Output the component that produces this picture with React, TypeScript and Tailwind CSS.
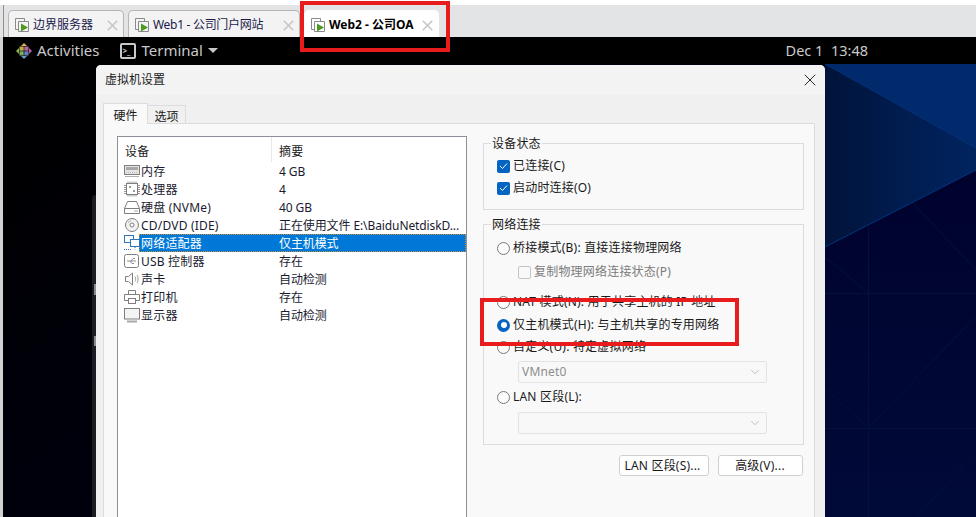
import { ChevronDown, X } from 'lucide-react';

const font = "font-['Noto_Sans','Noto_Sans_CJK_SC',sans-serif]";

function TabIcon() {
  return (
    <svg width="17" height="16" viewBox="0 0 17 16" className="shrink-0" fill="none">
      <path d="M4.5 12.5H1.5V1.5H10.5V4" stroke="#8a8a8a" />
      <path d="M4.5 4.5H14.5V14.5H4.5Z" stroke="#8a8a8a" />
      <path d="M7 6.5L14 10.5L7 14.5Z" fill="#4d9a1e" />
    </svg>
  );
}

function VmTab({
  label,
  width,
  active = false,
  tight = false,
}: {
  label: string;
  width: string;
  active?: boolean;
  tight?: boolean;
}) {
  return (
    <div
      className={`${width} h-[27px] flex items-center pl-[5px] pr-[2px] pt-[2px] rounded-t-[5px] border-t border-x ${
        active ? 'bg-white border-white font-bold text-black' : 'bg-[#f3f3f3] border-[#b5b5b5] text-[#1b1b4b]'
      }`}
    >
      <TabIcon />
      <span className={`ml-[2px] text-[12px] leading-none whitespace-nowrap flex-1 ${tight ? 'tracking-[-0.3px]' : ''}`}>
        {label}
      </span>
      <X size={17} strokeWidth={2.4} className="text-[#c8c8c8] shrink-0" />
    </div>
  );
}

function DeviceIcon({ name }: { name: string }) {
  const c = '#7e7e7e';
  return (
    <svg width="18" height="16" viewBox="0 0 18 16" fill="none" className="shrink-0 relative z-10">
      {name === 'memory' && (
        <>
          <rect x="1.5" y="2.5" width="15" height="9" fill="#e4e4e4" stroke={c} />
          <rect x="3" y="4" width="12" height="3" fill="#a8a8a8" />
          <path d="M3 9.5H15" stroke="#b8b8b8" strokeDasharray="1 1" />
          <path d="M2 13.5H16" stroke="#b0b0b0" />
        </>
      )}
      {name === 'cpu' && (
        <>
          <rect x="3.5" y="2.5" width="11" height="11" stroke={c} />
          <path d="M1 4.5H3M1 6.5H3M1 8.5H3M1 10.5H3M1 12.5H3M15 4.5H17M15 6.5H17M15 8.5H17M15 10.5H17M15 12.5H17M5 0.5V2M7 0.5V2M9 0.5V2M11 0.5V2M13 0.5V2M5 14V15.5M7 14V15.5M9 14V15.5M11 14V15.5M13 14V15.5" stroke="#9a9a9a" />
          <rect x="6" y="5" width="2" height="2" fill="#9a9a9a" />
          <rect x="10" y="9" width="2" height="2" fill="#9a9a9a" />
        </>
      )}
      {name === 'disk' && (
        <>
          <path d="M4.5 2.5H13.5L16.5 9.5V14.5H1.5V9.5Z" stroke={c} />
          <path d="M1.5 9.5H16.5" stroke={c} />
          <path d="M11 12H15" stroke="#a8a8a8" />
        </>
      )}
      {name === 'cd' && (
        <>
          <circle cx="9" cy="8" r="6.5" fill="#f2f2f2" stroke={c} />
          <circle cx="9" cy="8" r="2" fill="#fff" stroke={c} />
          <path d="M5 6A4.5 4.5 0 0 1 8 3.6" stroke="#b0b0b0" />
        </>
      )}
      {name === 'net' && (
        <>
          <rect x="1.5" y="0.5" width="9" height="7" fill="#fff" stroke="#2f74b8" />
          <rect x="7.5" y="4.5" width="9" height="7" fill="#fff" stroke="#2f74b8" />
          <path d="M1 14.5H9M12 12V14.5" stroke="#2f74b8" strokeDasharray="1 1" />
        </>
      )}
      {name === 'usb' && (
        <>
          <rect x="1.5" y="1.5" width="14" height="13" rx="2" stroke={c} />
          <path d="M4 8H13M8 8L10 5.5H12M7 8L9 10.5H11" stroke="#8c8c8c" />
        </>
      )}
      {name === 'sound' && (
        <>
          <path d="M2.5 5.5H5.5L9.5 2V14L5.5 10.5H2.5Z" stroke={c} />
          <path d="M12 5.5C13 7 13 9 12 10.5M14 4C15.5 6 15.5 10 14 12" stroke="#a0a0a0" />
        </>
      )}
      {name === 'printer' && (
        <>
          <path d="M5.5 5.5V1.5H12.5V5.5" stroke={c} />
          <path d="M5 11.5H1.5V5.5H16.5V11.5H13" stroke={c} />
          <rect x="5.5" y="9.5" width="7" height="5" stroke={c} />
        </>
      )}
      {name === 'display' && (
        <>
          <rect x="1.5" y="1.5" width="15" height="10.5" fill="#f4f4f4" stroke={c} />
          <path d="M4 14.5H14" stroke="#a8a8a8" strokeWidth="2" />
        </>
      )}
    </svg>
  );
}

const devices = [
  { icon: 'memory', name: '内存', summary: '4 GB' },
  { icon: 'cpu', name: '处理器', summary: '4' },
  { icon: 'disk', name: '硬盘 (NVMe)', summary: '40 GB' },
  { icon: 'cd', name: 'CD/DVD (IDE)', summary: '正在使用文件 E:\\BaiduNetdiskD...' },
  { icon: 'net', name: '网络适配器', summary: '仅主机模式', selected: true },
  { icon: 'usb', name: 'USB 控制器', summary: '存在' },
  { icon: 'sound', name: '声卡', summary: '自动检测' },
  { icon: 'printer', name: '打印机', summary: '存在' },
  { icon: 'display', name: '显示器', summary: '自动检测' },
];

function Check({ label }: { label: string }) {
  return (
    <div className="h-[22px] flex items-center gap-[3px]">
      <span className="w-[13px] h-[13px] rounded-[2px] bg-[#0563c1] flex items-center justify-center">
        <svg width="9" height="8" viewBox="0 0 9 8" fill="none">
          <path d="M1 4L3.5 6.5L8 1.5" stroke="#fff" strokeWidth="1" />
        </svg>
      </span>
      <span>{label}</span>
    </div>
  );
}

function Radio({ label, checked = false }: { label: string; checked?: boolean }) {
  return (
    <div className="flex items-center gap-[3px]">
      {checked ? (
        <span className="w-[13px] h-[13px] rounded-full bg-[#0563c1] flex items-center justify-center">
          <span className="w-[6px] h-[6px] rounded-full bg-white" />
        </span>
      ) : (
        <span className="w-[13px] h-[13px] rounded-full border border-[#7a7a7a] bg-[#fbfbfb]" />
      )}
      <span>{label}</span>
    </div>
  );
}

function Select({ value }: { value?: string }) {
  return (
    <div className="ml-[21px] w-[249px] h-[22px] border border-[#e3e3e3] rounded-[2px] bg-[#f8f8f8] flex items-center justify-between pl-[3px] pr-[4px] text-[#8d8d8d]">
      <span>{value}</span>
      <ChevronDown size={14} strokeWidth={1} className="text-[#9a9a9a]" />
    </div>
  );
}

// the wallpaper to the right of the dialog
function Wallpaper() {
  return (
    <svg width="151" height="453" viewBox="0 0 151 453" className="block">
      <defs>
        <linearGradient id="mid" x1="0" y1="0" x2="1" y2="0">
          <stop offset="0" stopColor="#011338" />
          <stop offset="0.5" stopColor="#011c50" />
          <stop offset="1" stopColor="#00245f" />
        </linearGradient>
        <linearGradient id="low" x1="0" y1="0" x2="0" y2="1">
          <stop offset="0" stopColor="#00002a" />
          <stop offset="1" stopColor="#000a38" />
        </linearGradient>
      </defs>
      <rect width="151" height="453" fill="url(#low)" />
      <path d="M0 0H151V84Z" fill="#002a6c" />
      <path d="M0 0L151 84V106L0 183Z" fill="url(#mid)" />
      <path d="M0 0L151 84M151 106L0 183" stroke="#04347c" />
      <path
        d="M0 229.5H151M0 364.5H151M43.5 163V453M43 229L0 193M43 364L0 324M43 364L151 252M88 139L151 206M151 388L92 453"
        stroke="#04123a"
      />
    </svg>
  );
}

export default function App() {
  return (
    <div className={`${font} relative w-[976px] h-[517px] overflow-hidden bg-white text-[12px] text-[#1a1a1a]`}>
      {/* vm tabs */}
      <div className="mt-[5px] h-[32px] bg-[#e3e4e6] pl-[3px]">
        <div className="h-full flex items-end pl-[4px] gap-[4px] border-l border-[#8f8f8f]">
          <VmTab label="边界服务器" width="w-[116px]" />
          <VmTab label="Web1 - 公司门户网站" width="w-[172px]" tight />
          <VmTab label="Web2 - 公司OA" width="w-[135px]" active />
        </div>
      </div>

      <div className="h-[480px] flex flex-col border-l-[3px] border-l-[#d2d2d2]">
        {/* gnome top bar */}
        <div className="h-[27px] bg-black flex items-center text-[#c9c9c9] text-[15px] pl-[13px] pr-[108px] font-['Noto_Sans',sans-serif]">
          <svg width="16" height="16" viewBox="0 0 16 16" className="shrink-0">
            <path d="M8 0L11 3H5Z" fill="#d8b45a" />
            <path d="M16 8L13 11V5Z" fill="#c05aa0" />
            <path d="M8 16L5 13H11Z" fill="#6a9fc4" />
            <path d="M0 8L3 5V11Z" fill="#8fb64a" />
            <rect x="3.5" y="3.5" width="4.2" height="4.2" fill="#b8b050" />
            <rect x="8.3" y="3.5" width="4.2" height="4.2" fill="#b8679a" />
            <rect x="3.5" y="8.3" width="4.2" height="4.2" fill="#7cab6c" />
            <rect x="8.3" y="8.3" width="4.2" height="4.2" fill="#6684bc" />
          </svg>
          <span className="ml-[5px]">Activities</span>
          <span className="ml-[20px] w-[16px] h-[16px] border-2 border-[#c9c9c9] rounded-[2px] text-[8px] leading-[11px] pl-[1px] font-bold">
            &gt;_
          </span>
          <span className="ml-[6px]">Terminal</span>
          <span className="ml-[5px] w-0 h-0 border-x-[5px] border-x-transparent border-t-[5px] border-t-[#c9c9c9]" />
          <span className="ml-auto whitespace-pre text-[14.5px]">Dec 1  13:48</span>
        </div>

        {/* desktop */}
        <div className="flex-1 flex bg-[linear-gradient(145deg,#000000_0%,#00001e_100%)]">
          <div className="w-[93px] shrink-0 flex justify-end">
            <div className="mt-[131px] w-[4px] h-[322px] bg-[#1c1d22] rounded-tl-[4px] flex flex-col items-end">
              <div className="mt-[89px] w-[2px] h-[11px] bg-[#8c8c8c]" />
              <div className="mt-[41px] w-[2px] h-[10px] bg-[#8c8c8c]" />
            </div>
          </div>

          {/* settings dialog */}
          <div className="w-[729px] h-[452px] mt-[1px] shrink-0 rounded-t-[5px] bg-[#f0f0f0] flex flex-col">
            <div className="h-[30px] shrink-0 rounded-t-[5px] bg-[#f3f3f3] flex items-center justify-between pl-[9px] pr-[5px]">
              <span className="text-[12px]">虚拟机设置</span>
              <X size={20} strokeWidth={1} className="text-black" />
            </div>

            <div className="pl-[7px] pr-[10px] flex-1 flex flex-col pt-[8px]">
              <div className="flex items-end h-[21px] shrink-0 relative z-10">
                <div className="w-[45px] h-[21px] bg-[#f9f9f9] border border-b-0 border-[#dcdcdc] text-center leading-[23px]">硬件</div>
                <div className="w-[38px] h-[19px] bg-[#f0f0f0] border border-l-0 border-[#dcdcdc] text-center leading-[22px]">选项</div>
              </div>

              <div className="flex-1 -mt-px bg-[#f9f9f9] border border-[#dcdcdc] border-b-0 pl-[13px] pr-[11px] pt-[12px] flex gap-[16px]">
                {/* device list */}
                <div className="w-[350px] shrink-0 h-[400px] bg-white border border-[#8b9099] tracking-[0.2px]">
                  <div className="h-[25px] flex">
                    <div className="w-[154px] pl-[7px] leading-[29px] border-r border-[#e8e8e8]">设备</div>
                    <div className="pl-[7px] leading-[29px]">摘要</div>
                  </div>
                  {devices.map((d) => (
                    <div key={d.name} className="h-[18px] flex items-center pl-[5px]">
                      <DeviceIcon name={d.icon} />
                      <div
                        className={`flex-1 h-[18px] -ml-[2px] pl-[2px] pt-[1px] flex items-center ${
                          d.selected
                            ? 'bg-[#0078d7] text-white outline outline-1 -outline-offset-1 outline-dotted outline-[#c98a3a]'
                            : 'text-[#1a1a30]'
                        }`}
                      >
                        <span className="w-[138px] whitespace-nowrap">{d.name}</span>
                        <span className="whitespace-nowrap tracking-[-0.1px]">{d.summary}</span>
                      </div>
                    </div>
                  ))}
                </div>

                {/* right settings */}
                <div className="w-[321px] shrink-0 flex flex-col tracking-[0.2px]">
                  <fieldset className="h-[75px] -mt-[1px] border border-[#dcdcdc] pl-[13px]">
                    <legend className="px-[1px] -ml-[6px] leading-[17px]">设备状态</legend>
                    <div className="mt-[3px]">
                      <Check label="已连接(C)" />
                      <Check label="启动时连接(O)" />
                    </div>
                  </fieldset>

                  <fieldset className="h-[229px] mt-[6px] border border-[#dcdcdc] pl-[13px]">
                    <legend className="px-[1px] -ml-[6px] leading-[17px]">网络连接</legend>
                    <div className="h-[24px] mt-[3px] flex items-center">
                      <Radio label="桥接模式(B): 直接连接物理网络" />
                    </div>
                    <div className="h-[24px] ml-[21px] flex items-center gap-[3px] text-[#7c7c7c]">
                      <span className="w-[13px] h-[13px] rounded-[2px] border border-[#c4c4c4]" />
                      复制物理网络连接状态(P)
                    </div>
                    <div className="h-[24px] mt-[6px] flex items-center">
                      <Radio label="NAT 模式(N): 用于共享主机的 IP 地址" />
                    </div>
                    <div className="h-[22px] flex items-center">
                      <Radio label="仅主机模式(H): 与主机共享的专用网络" checked />
                    </div>
                    <div className="h-[22px] flex items-center">
                      <Radio label="自定义(U): 特定虚拟网络" />
                    </div>
                    <div className="mt-[3px]">
                      <Select value="VMnet0" />
                    </div>
                    <div className="h-[24px] mt-[2px] flex items-center">
                      <Radio label="LAN 区段(L):" />
                    </div>
                    <div className="mt-[3px]">
                      <Select />
                    </div>
                  </fieldset>

                  <div className="mt-[10px] flex justify-end gap-[9px] pr-[1px]">
                    <div className="w-[90px] h-[21px] bg-white border border-[#d0d0d0] rounded-[3px] text-center leading-[20px] pr-[3px]">LAN 区段(S)...</div>
                    <div className="w-[85px] h-[21px] bg-white border border-[#d0d0d0] rounded-[3px] text-center leading-[20px] pr-[1px]">高级(V)...</div>
                  </div>
                </div>
              </div>
            </div>
          </div>

          <div className="flex-1 overflow-hidden">
            <Wallpaper />
          </div>
        </div>
      </div>

      {/* red annotation boxes */}
      <div className="absolute left-[300px] top-[1px] w-[150px] h-[51px] border-4 border-[#e81c1c]" />
      <div className="absolute left-[480px] top-[298px] w-[259px] h-[48px] border-4 border-[#e81c1c]" />
    </div>
  );
}
